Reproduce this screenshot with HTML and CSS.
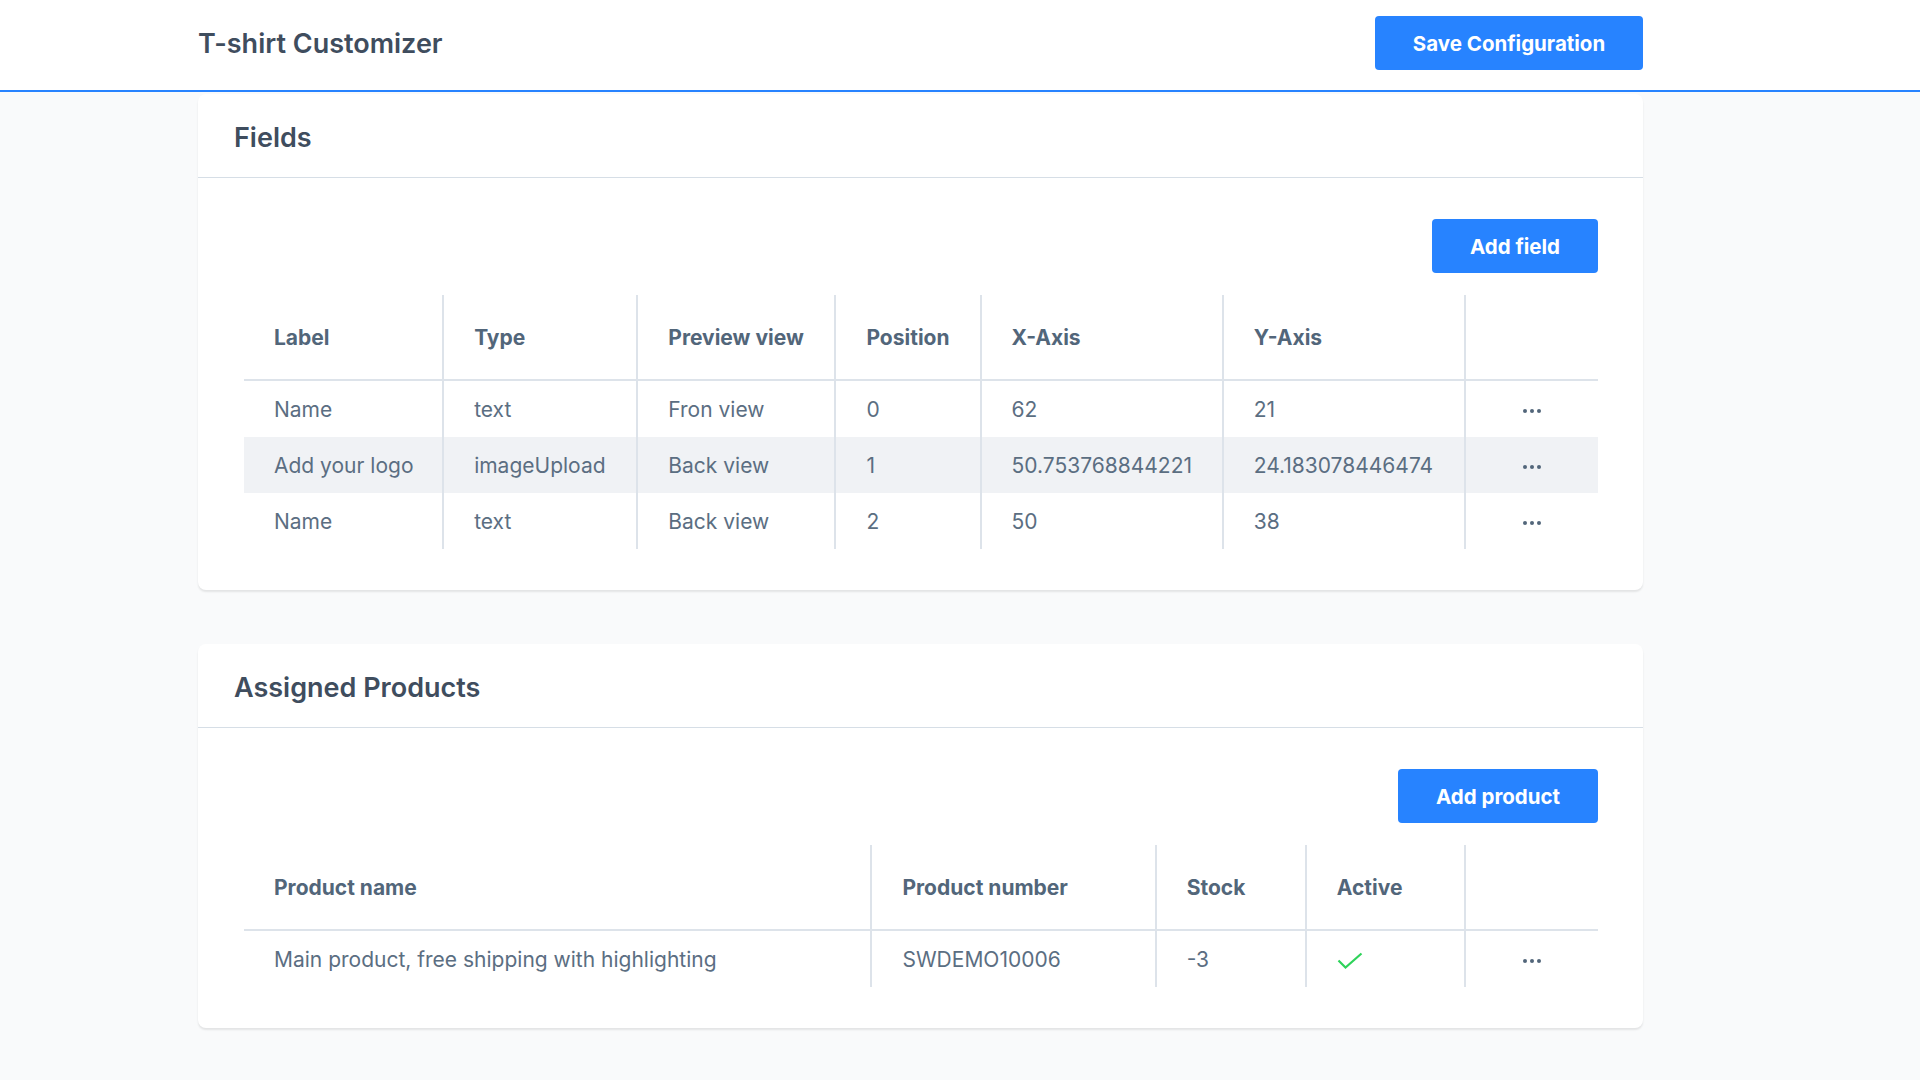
FILE: index.html
```html
<!DOCTYPE html>
<html lang="en">
<head>
    <meta charset="UTF-8">
    <meta name="viewport" content="width=device-width, initial-scale=1.0">
    <title>T-shirt Customizer</title>
    <link rel="stylesheet" href="styles.css">
</head>
<body>
    <div class="topbar">
        <div class="topbar-inner">
            <h1 class="page-title">T-shirt Customizer</h1>
            <button class="btn btn-save">Save Configuration</button>
        </div>
    </div>

    <div class="content">
        <!-- Fields -->
        <div class="card">
            <div class="card-header">
                <h2>Fields</h2>
            </div>
            <div class="card-body">
                <div class="toolbar">
                    <button class="btn btn-add-field">Add field</button>
                </div>
                <table class="grid fields-grid">
                    <thead>
                        <tr>
                            <th class="c-label">Label</th>
                            <th class="c-type">Type</th>
                            <th class="c-view">Preview view</th>
                            <th class="c-pos">Position</th>
                            <th class="c-x">X-Axis</th>
                            <th class="c-y">Y-Axis</th>
                            <th class="c-actions"></th>
                        </tr>
                    </thead>
                    <tbody>
                        <tr>
                            <td>Name</td>
                            <td>text</td>
                            <td>Fron view</td>
                            <td>0</td>
                            <td>62</td>
                            <td>21</td>
                            <td class="actions"><svg class="dots" width="20" height="6" viewBox="0 0 20 6"><circle cx="3" cy="3" r="2"/><circle cx="10" cy="3" r="2"/><circle cx="17" cy="3" r="2"/></svg></td>
                        </tr>
                        <tr class="striped">
                            <td>Add your logo</td>
                            <td>imageUpload</td>
                            <td>Back view</td>
                            <td>1</td>
                            <td>50.753768844221</td>
                            <td>24.183078446474</td>
                            <td class="actions"><svg class="dots" width="20" height="6" viewBox="0 0 20 6"><circle cx="3" cy="3" r="2"/><circle cx="10" cy="3" r="2"/><circle cx="17" cy="3" r="2"/></svg></td>
                        </tr>
                        <tr>
                            <td>Name</td>
                            <td>text</td>
                            <td>Back view</td>
                            <td>2</td>
                            <td>50</td>
                            <td>38</td>
                            <td class="actions"><svg class="dots" width="20" height="6" viewBox="0 0 20 6"><circle cx="3" cy="3" r="2"/><circle cx="10" cy="3" r="2"/><circle cx="17" cy="3" r="2"/></svg></td>
                        </tr>
                    </tbody>
                </table>
            </div>
        </div>

        <!-- Assigned products -->
        <div class="card">
            <div class="card-header">
                <h2>Assigned Products</h2>
            </div>
            <div class="card-body">
                <div class="toolbar">
                    <button class="btn btn-add-product">Add product</button>
                </div>
                <table class="grid products-grid">
                    <thead>
                        <tr>
                            <th class="c-name">Product name</th>
                            <th class="c-number">Product number</th>
                            <th class="c-stock">Stock</th>
                            <th class="c-active">Active</th>
                            <th class="c-actions"></th>
                        </tr>
                    </thead>
                    <tbody>
                        <tr>
                            <td>Main product, free shipping with highlighting</td>
                            <td>SWDEMO10006</td>
                            <td>-3</td>
                            <td><svg class="check" width="26" height="17" viewBox="0 0 26 17"><path d="M1.5 8.5 L8.5 15.5 L24.5 1.5"/></svg></td>
                            <td class="actions"><svg class="dots" width="20" height="6" viewBox="0 0 20 6"><circle cx="3" cy="3" r="2"/><circle cx="10" cy="3" r="2"/><circle cx="17" cy="3" r="2"/></svg></td>
                        </tr>
                    </tbody>
                </table>
            </div>
        </div>
    </div>
</body>
</html>
```

FILE: styles.css
```css
body {
    margin: 0;
    background-color: #f9fafb;
    font-family: Inter, "Noto Sans", sans-serif;
    color: #52667a;
}

/* Kopfleiste */
.topbar {
    background-color: #fff;
    border-bottom: 2px solid #2783ff;
    height: 90px;
}

.topbar-inner {
    width: 1445px;
    margin-left: 198px;
    height: 100%;
    box-sizing: border-box;
    padding-bottom: 4px;
    display: flex;
    align-items: center;
    justify-content: space-between;
}

.page-title {
    margin: 0;
    font-size: 27px;
    font-weight: 600;
    color: #3f4d5e;
}

.btn {
    background-color: #2783ff;
    color: #fff;
    border: none;
    border-radius: 4px;
    font-family: inherit;
    font-size: 20.5px;
    font-weight: 700;
    height: 54px;
    cursor: pointer;
}

.btn:hover {
    background-color: #1f6fe0;
}

.btn-save {
    width: 268px;
}

.btn-add-field {
    width: 166px;
}

.btn-add-product {
    width: 200px;
}

/* Inhalt */
.content {
    width: 1445px;
    margin-left: 198px;
    padding-top: 2px;
}

.card {
    background-color: #fff;
    border-radius: 8px;
    box-shadow: 0 2px 2px rgba(0, 0, 0, 0.09);
    margin-bottom: 54px;
}

.card-header {
    height: 79px;
    padding: 4px 36px 0;
    display: flex;
    align-items: center;
    border-bottom: 1px solid #d6dee6;
}

.card-header h2 {
    margin: 0;
    font-size: 27px;
    font-weight: 600;
    color: #3f4d5e;
}

.card-body {
    padding: 41px 45px 41px 46px;
}

.toolbar {
    display: flex;
    justify-content: flex-end;
    margin-bottom: 22px;
}

/* Tabellen */
.grid {
    width: 100%;
    border-collapse: collapse;
    table-layout: fixed;
    font-size: 21px;
}

.grid th {
    box-sizing: border-box;
    text-align: left;
    font-weight: 700;
    height: 85px;
    padding: 0 30px;
    border-bottom: 2px solid #dde3ea;
    color: #52667a;
}

.grid td {
    height: 56px;
    padding: 0 30px;
    color: #5b6e82;
    white-space: nowrap;
}

.grid th + th,
.grid td + td {
    border-left: 2px solid #dde3ea;
}

.grid tr.striped td {
    background-color: #f0f2f5;
}

.grid td.actions {
    text-align: center;
    padding: 0;
}

.dots {
    fill: #52667a;
    vertical-align: middle;
}

.check {
    fill: none;
    stroke: #2ed35a;
    stroke-width: 2.2;
    vertical-align: middle;
}

/* Spaltenbreiten Felder */
.fields-grid .c-label { width: 199px; }
.fields-grid .c-type { width: 194px; }
.fields-grid .c-view { width: 198px; }
.fields-grid .c-pos { width: 145px; }
.fields-grid .c-x { width: 242px; }
.fields-grid .c-y { width: 242px; }
.fields-grid .c-actions { width: 133px; }

/* Spaltenbreiten Produkte */
.products-grid .c-name { width: 627px; }
.products-grid .c-number { width: 284px; }
.products-grid .c-stock { width: 150px; }
.products-grid .c-active { width: 159px; }
.products-grid .c-actions { width: 133px; }
```
